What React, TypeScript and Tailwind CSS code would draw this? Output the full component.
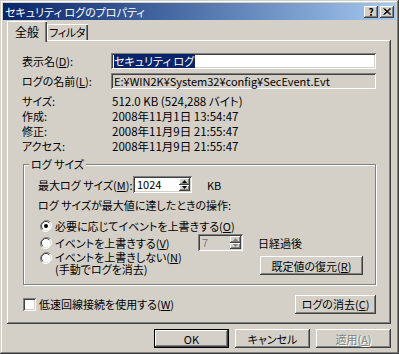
const raised =
  'shadow-[inset_-1px_-1px_#404040,inset_1px_1px_#ffffff,inset_-2px_-2px_#808080]'
const sunken =
  'shadow-[inset_1px_1px_#808080,inset_-1px_-1px_#ffffff,inset_2px_2px_#404040,inset_-2px_-2px_#d4d0c8]'

function Mn({ children }: { children: string }) {
  return <u className="underline-offset-1">{children}</u>
}

function Button({
  children,
  className = '',
  disabled = false,
  isDefault = false,
}: {
  children: React.ReactNode
  className?: string
  disabled?: boolean
  isDefault?: boolean
}) {
  return (
    <div
      className={`flex items-center justify-center whitespace-nowrap bg-[#d4d0c8] ${
        isDefault
          ? 'border border-black shadow-[inset_-1px_-1px_#404040,inset_1px_1px_#ffffff,inset_-2px_-2px_#808080]'
          : raised
      } ${disabled ? 'text-[#808080] [text-shadow:1px_1px_0_#ffffff]' : ''} ${className}`}
    >
      {children}
    </div>
  )
}

function Spin({ value, disabled = false, className = '' }: { value: string; disabled?: boolean; className?: string }) {
  return (
    <div className={`flex h-[17px] shrink-0 ${disabled ? 'bg-[#d4d0c8]' : 'bg-white'} ${sunken} p-[2px] ${className}`}>
      <div className={`flex-1 pl-[2px] leading-[13px] ${disabled ? 'text-[#808080]' : ''}`}>{value}</div>
      <div className="flex w-[11px] flex-col">
        {[0, 1].map((i) => (
          <div key={i} className={`flex h-[6.5px] items-center justify-center bg-[#d4d0c8] ${raised}`}>
            <svg width="5" height="3" viewBox="0 0 5 3">
              <path
                d={i === 0 ? 'M2.5 0 L5 3 L0 3 Z' : 'M0 0 L5 0 L2.5 3 Z'}
                fill={disabled ? '#808080' : '#000'}
              />
            </svg>
          </div>
        ))}
      </div>
    </div>
  )
}

function Radio({ checked = false }: { checked?: boolean }) {
  return (
    <svg width="12" height="12" viewBox="0 0 12 12" className="shrink-0">
      <path d="M10.2 1.8 A6 6 0 0 0 1.8 10.2" stroke="#808080" strokeWidth="1" fill="none" />
      <path d="M1.8 10.2 A6 6 0 0 0 10.2 1.8" stroke="#ffffff" strokeWidth="1" fill="none" />
      <circle cx="6" cy="6" r="4.5" fill="#ffffff" />
      <path d="M9.2 2.8 A4.5 4.5 0 0 0 2.8 9.2" stroke="#404040" strokeWidth="1" fill="none" />
      {checked && <circle cx="6" cy="6" r="2" fill="#000" />}
    </svg>
  )
}

export default function App() {
  return (
    <div className="flex h-[354px] w-[399px] flex-col whitespace-nowrap bg-[#d4d0c8] p-[3px] font-['Noto_Sans_CJK_JP',sans-serif] text-[11px] leading-[14px] text-black [font-feature-settings:'palt'] shadow-[inset_-1px_-1px_#404040,inset_1px_1px_#d4d0c8,inset_-2px_-2px_#808080,inset_2px_2px_#ffffff]">
      {/* title bar */}
      <div className="flex h-[17px] items-center bg-linear-to-r from-[#0a246a] to-[#a6caf0] pl-[2px] pr-[2px] text-white">
        <span>セキュリティ ログのプロパティ</span>
        <div className="ml-auto flex gap-[2px]">
          <div className={`flex h-[12px] w-[14px] items-center justify-center bg-[#d4d0c8] text-[10px] font-bold leading-none text-black ${raised}`}>
            ?
          </div>
          <div className={`flex h-[12px] w-[14px] items-center justify-center bg-[#d4d0c8] ${raised}`}>
            <svg width="8" height="7" viewBox="0 0 8 7">
              <path d="M0.5 0.5 L7 6.5 M1.5 0.5 L8 6.5 M7 0.5 L0.5 6.5 M8 0.5 L1.5 6.5" stroke="#000" strokeWidth="1" />
            </svg>
          </div>
        </div>
      </div>

      {/* tabs */}
      <div className="mt-[1px] flex h-[19px] items-end pl-[4px]">
        <div className="relative z-10 -mb-[2px] flex h-[21px] w-[40px] items-start justify-center bg-[#d4d0c8] pt-[4px] text-[12px] shadow-[inset_1px_1px_#ffffff,inset_-1px_0_#404040,inset_-2px_0_#808080]">
          全般
        </div>
        <div className="flex h-[16px] items-center justify-center bg-[#d4d0c8] pl-[2px] pr-[3px] tracking-[-0.3px] shadow-[inset_1px_1px_#ffffff,inset_-1px_0_#404040,inset_-2px_0_#808080]">
          フィルタ
        </div>
      </div>

      {/* panel */}
      <div className={`ml-[4px] flex h-[284px] w-[384px] flex-col bg-[#d4d0c8] pl-[15px] pr-[15px] pt-[13px] ${raised}`}>
        <div className="flex h-[16px] items-center">
          <div className="w-[89px]">
            表示名(<Mn>D</Mn>):
          </div>
          <div className={`flex h-[16px] w-[265px] items-center bg-white pl-[3px] ${sunken}`}>
            <span className="bg-[#0a246a] pr-px text-white">セキュリティ ログ</span>
          </div>
        </div>
        <div className="mt-[4px] flex h-[16px] items-center">
          <div className="w-[89px]">
            ログの名前(<Mn>L</Mn>):
          </div>
          <div className={`flex h-[16px] w-[265px] items-center bg-[#d4d0c8] pl-[3px] ${sunken}`}>
            E:¥WIN2K¥System32¥config¥SecEvent.Evt
          </div>
        </div>
        <div className="mt-[4px] flex flex-col">
          {[
            ['サイズ:', '512.0 KB (524,288 バイト)'],
            ['作成:', '2008年11月1日 13:54:47'],
            ['修正:', '2008年11月9日 21:55:47'],
            ['アクセス:', '2008年11月9日 21:55:47'],
          ].map(([k, v]) => (
            <div key={k} className="flex h-[15px] items-center">
              <div className="w-[90px]">{k}</div>
              <div className="text-[11.5px]">{v}</div>
            </div>
          ))}
        </div>

        {/* log size group */}
        <fieldset className="ml-px mt-[4px] h-[128px] w-[353px] border border-[#808080] shadow-[1px_1px_0_#ffffff,inset_1px_1px_0_#ffffff]">
          <legend className="ml-[5px] bg-[#d4d0c8] px-[2px] leading-[14px]">ログ サイズ</legend>
          <div className="flex flex-col pl-[14px]">
            <div className="mt-[5px] flex h-[17px] items-center">
              <div className="w-[95px]">
                最大ログ サイズ(<Mn>M</Mn>):
              </div>
              <Spin value="1024" className="w-[59px]" />
              <div className="ml-[15px]">KB</div>
            </div>
            <div className="mt-[5px] flex h-[14px] items-center">ログ サイズが最大値に達したときの操作:</div>
            <div className="mt-[6px] flex h-[16px] items-center gap-[3px] pl-[2px]">
              <Radio checked />
              <span>
                必要に応じてイベントを上書きする(<Mn>O</Mn>)
              </span>
            </div>
            <div className="flex h-[17px] items-center gap-[3px] pl-[2px]">
              <Radio />
              <span className="w-[140px]">
                イベントを上書きする(<Mn>V</Mn>)
              </span>
              <Spin value="7" disabled className="w-[45px]" />
              <span className="ml-[12px]">日経過後</span>
            </div>
            <div className="flex items-start">
              <div className="flex items-start gap-[3px] pl-[2px] pt-[1px]">
                <Radio />
                <div className="-mt-[1px] flex flex-col leading-[13px]">
                  <span>
                    イベントを上書きしない(<Mn>N</Mn>)
                  </span>
                  <span className="-mt-px">(手動でログを消去)</span>
                </div>
              </div>
              <Button className="ml-auto mr-[12px] mt-[5px] h-[19px] w-[103px]">
                <span>
                  既定値の復元(<Mn>R</Mn>)
                </span>
              </Button>
            </div>
          </div>
        </fieldset>

        <div className="mt-[9px] flex h-[20px] items-center">
          <div className={`ml-px h-[13px] w-[13px] bg-white ${sunken}`} />
          <span className="ml-[3px]">
            低速回線接続を使用する(<Mn>W</Mn>)
          </span>
          <Button className="ml-auto h-[19px] w-[81px]">
            <span>
              ログの消去(<Mn>C</Mn>)
            </span>
          </Button>
        </div>
      </div>

      {/* dialog buttons */}
      <div className="mt-[5px] flex justify-end gap-[6px] pr-[5px]">
        <Button isDefault className="h-[19px] w-[75px]">
          OK
        </Button>
        <Button className="h-[19px] w-[75px]">キャンセル</Button>
        <Button disabled className="h-[19px] w-[75px]">
          <span>
            適用(<Mn>A</Mn>)
          </span>
        </Button>
      </div>
    </div>
  )
}
